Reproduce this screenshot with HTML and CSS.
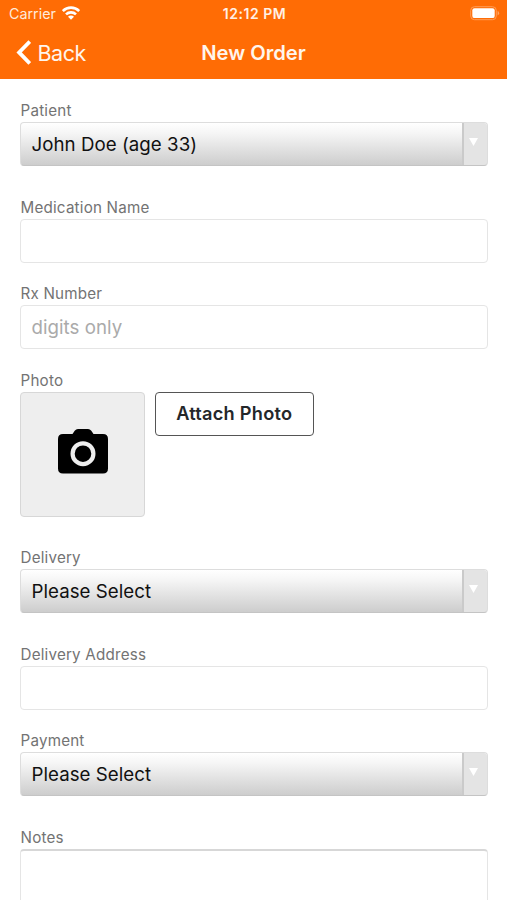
FILE: index.html
```
<!DOCTYPE html>
<html lang="en">
<head>
<meta charset="utf-8">
<title>New Order</title>
<link rel="stylesheet" href="styles.css">
</head>
<body>
<header class="header">
  <div class="status">
    <div class="carrier"><span>Carrier</span>
      <svg class="wifi" width="18" height="14" viewBox="0 0 18 14"><g fill="none" stroke="#fff" stroke-width="2.6"><path d="M.8 5a11.600 11.600 0 0 1 16.400 0"/><path d="M4 8.400a7.100 7.100 0 0 1 10 0"/></g><path fill="#fff" d="M9 13.700 6 10.700a4.200 4.200 0 0 1 6 0z"/></svg>
    </div>
    <span class="time">12:12 PM</span>
    <svg class="battery" width="30" height="15" viewBox="0 0 30 15"><rect x=".7" y=".7" width="25.600" height="13" rx="3.800" fill="none" stroke="#ff9d57" stroke-width="1"/><rect x="2.300" y="2.300" width="22.400" height="9.800" rx="2.200" fill="#fff"/><path d="M27.600 5v4.400q1.500-.6 1.500-2.200T27.600 5z" fill="#ffa566"/></svg>
  </div>
  <nav class="nav">
    <a class="back"><svg width="16" height="26" viewBox="0 0 16 26"><path d="M14.800 1.500 4.100 12.400l10.700 11.100" fill="none" stroke="#fff" stroke-width="3.800"/></svg><span>Back</span></a>
    <h1 class="title">New Order</h1>
  </nav>
</header>
<main class="form">
  <div class="field picker"><label>Patient</label>
    <div class="select"><span class="value">John Doe (age 33)</span><span class="arrow"><svg width="9" height="8" viewBox="0 0 9 8"><path d="M0 0h9L4.500 8z" fill="#fff"/></svg></span></div></div>
  <div class="field"><label>Medication Name</label><div class="input"></div></div>
  <div class="field"><label>Rx Number</label><div class="input"><span class="placeholder">digits only</span></div></div>
  <div class="field picker"><label>Photo</label>
    <div class="photo-row">
      <div class="photo"><svg width="50" height="45" viewBox="0 0 50 45"><path fill="#000" d="M5 5h9.500l2.200-3.200Q18 0 20 0h10q2 0 3.300 1.800L35.500 5H45q5 0 5 5v29.500q0 5-5 5H5q-5 0-5-5V10q0-5 5-5z"/><circle cx="25" cy="24.700" r="10.400" fill="none" stroke="#eee" stroke-width="4.200"/></svg></div>
      <div class="attach"><span>Attach Photo</span></div>
    </div></div>
  <div class="field picker"><label>Delivery</label>
    <div class="select"><span class="value">Please Select</span><span class="arrow"><svg width="9" height="8" viewBox="0 0 9 8"><path d="M0 0h9L4.500 8z" fill="#fff"/></svg></span></div></div>
  <div class="field"><label>Delivery Address</label><div class="input"></div></div>
  <div class="field picker"><label>Payment</label>
    <div class="select"><span class="value">Please Select</span><span class="arrow"><svg width="9" height="8" viewBox="0 0 9 8"><path d="M0 0h9L4.500 8z" fill="#fff"/></svg></span></div></div>
  <div class="field notes-field"><label>Notes</label><div class="notes"></div></div>
</main>
</body>
</html>
```
FILE: styles.css
```
* { box-sizing: border-box; }
html, body { margin: 0; height: 900px; overflow: hidden; }
body { font-family: Inter, "Liberation Sans", sans-serif; background: #fff; color: #1c1c1c; display: flex; flex-direction: column; }
svg { display: block; }
.header { height: 79px; flex: none; background: #ff6c05; color: #fff; }
.status { height: 27px; display: grid; grid-template-columns: 1fr auto 1fr; align-items: center; padding: 1px 7px 0 9px; line-height: 18px; }
.carrier { display: flex; align-items: center; gap: 6px; font-size: 14.300px; color: #ffeadb; }
.wifi { margin-top: -2px; }
.time { font-weight: 600; font-size: 14px; letter-spacing: .52px; color: #fff0e5; }
.battery { justify-self: end; margin-top: -2px; }
.nav { height: 51px; display: grid; grid-template-columns: 1fr auto 1fr; align-items: center; padding: 0 15px; }
.back { display: flex; align-items: center; gap: 6.500px; font-size: 21.500px; letter-spacing: -.45px; line-height: 26px; color: #fff5ed; }
.title { margin: 0; font-size: 20.200px; line-height: 26px; font-weight: 600; color: #fff5ed; }
.form { flex: 1; min-height: 0; overflow: hidden; display: flex; flex-direction: column; padding: 21px 19.500px 0 20px; }
.field { flex: none; display: flex; flex-direction: column; margin-bottom: 20.600px; }
.picker { margin-bottom: 30.500px; }
label { height: 22px; padding-top: 1px; line-height: 20px; font-size: 15.200px; letter-spacing: .2px; color: #737373; padding-left: .500px; }
.input, .select { height: 44px; border: 1.500px solid #e5e5e5; border-radius: 4px; display: flex; align-items: center; font-size: 18.700px; letter-spacing: .04px; }
.input { padding-left: 10.500px; background: #fff; }
.placeholder { color: #aaa; }
.select { border-color: #ddd; border-bottom-color: #c4c4c4; background: linear-gradient(#fff, #f5f5f5 25%, #cdcdcd); overflow: hidden; }
.value { flex: 1; padding-left: 10.500px; color: #111; }
.arrow { width: 25px; height: 100%; border-left: 2px solid #cacaca; background: #e4e4e4; display: flex; justify-content: center; padding: 14.500px 3px 0 0; }
.photo-row { display: flex; gap: 10px; align-items: flex-start; }
.photo { width: 125px; height: 125px; background: #eee; border: 1px solid #d7d7d7; border-radius: 4px; display: flex; align-items: center; justify-content: center; }
.photo svg { margin-top: -5px; }
.attach { width: 158.500px; height: 44px; border: 1.500px solid #555; border-radius: 4px; display: flex; align-items: center; justify-content: center; padding-bottom: 1.500px; font-size: 18.200px; letter-spacing: .25px; font-weight: 600; color: #24272a; }
.notes-field { flex: 1; margin: 0; }
.notes { flex: 1; border: 1.500px solid #e5e5e5; border-top: 2px solid #d7d7d7; border-bottom: 0; border-radius: 4px 4px 0 0; }
```
